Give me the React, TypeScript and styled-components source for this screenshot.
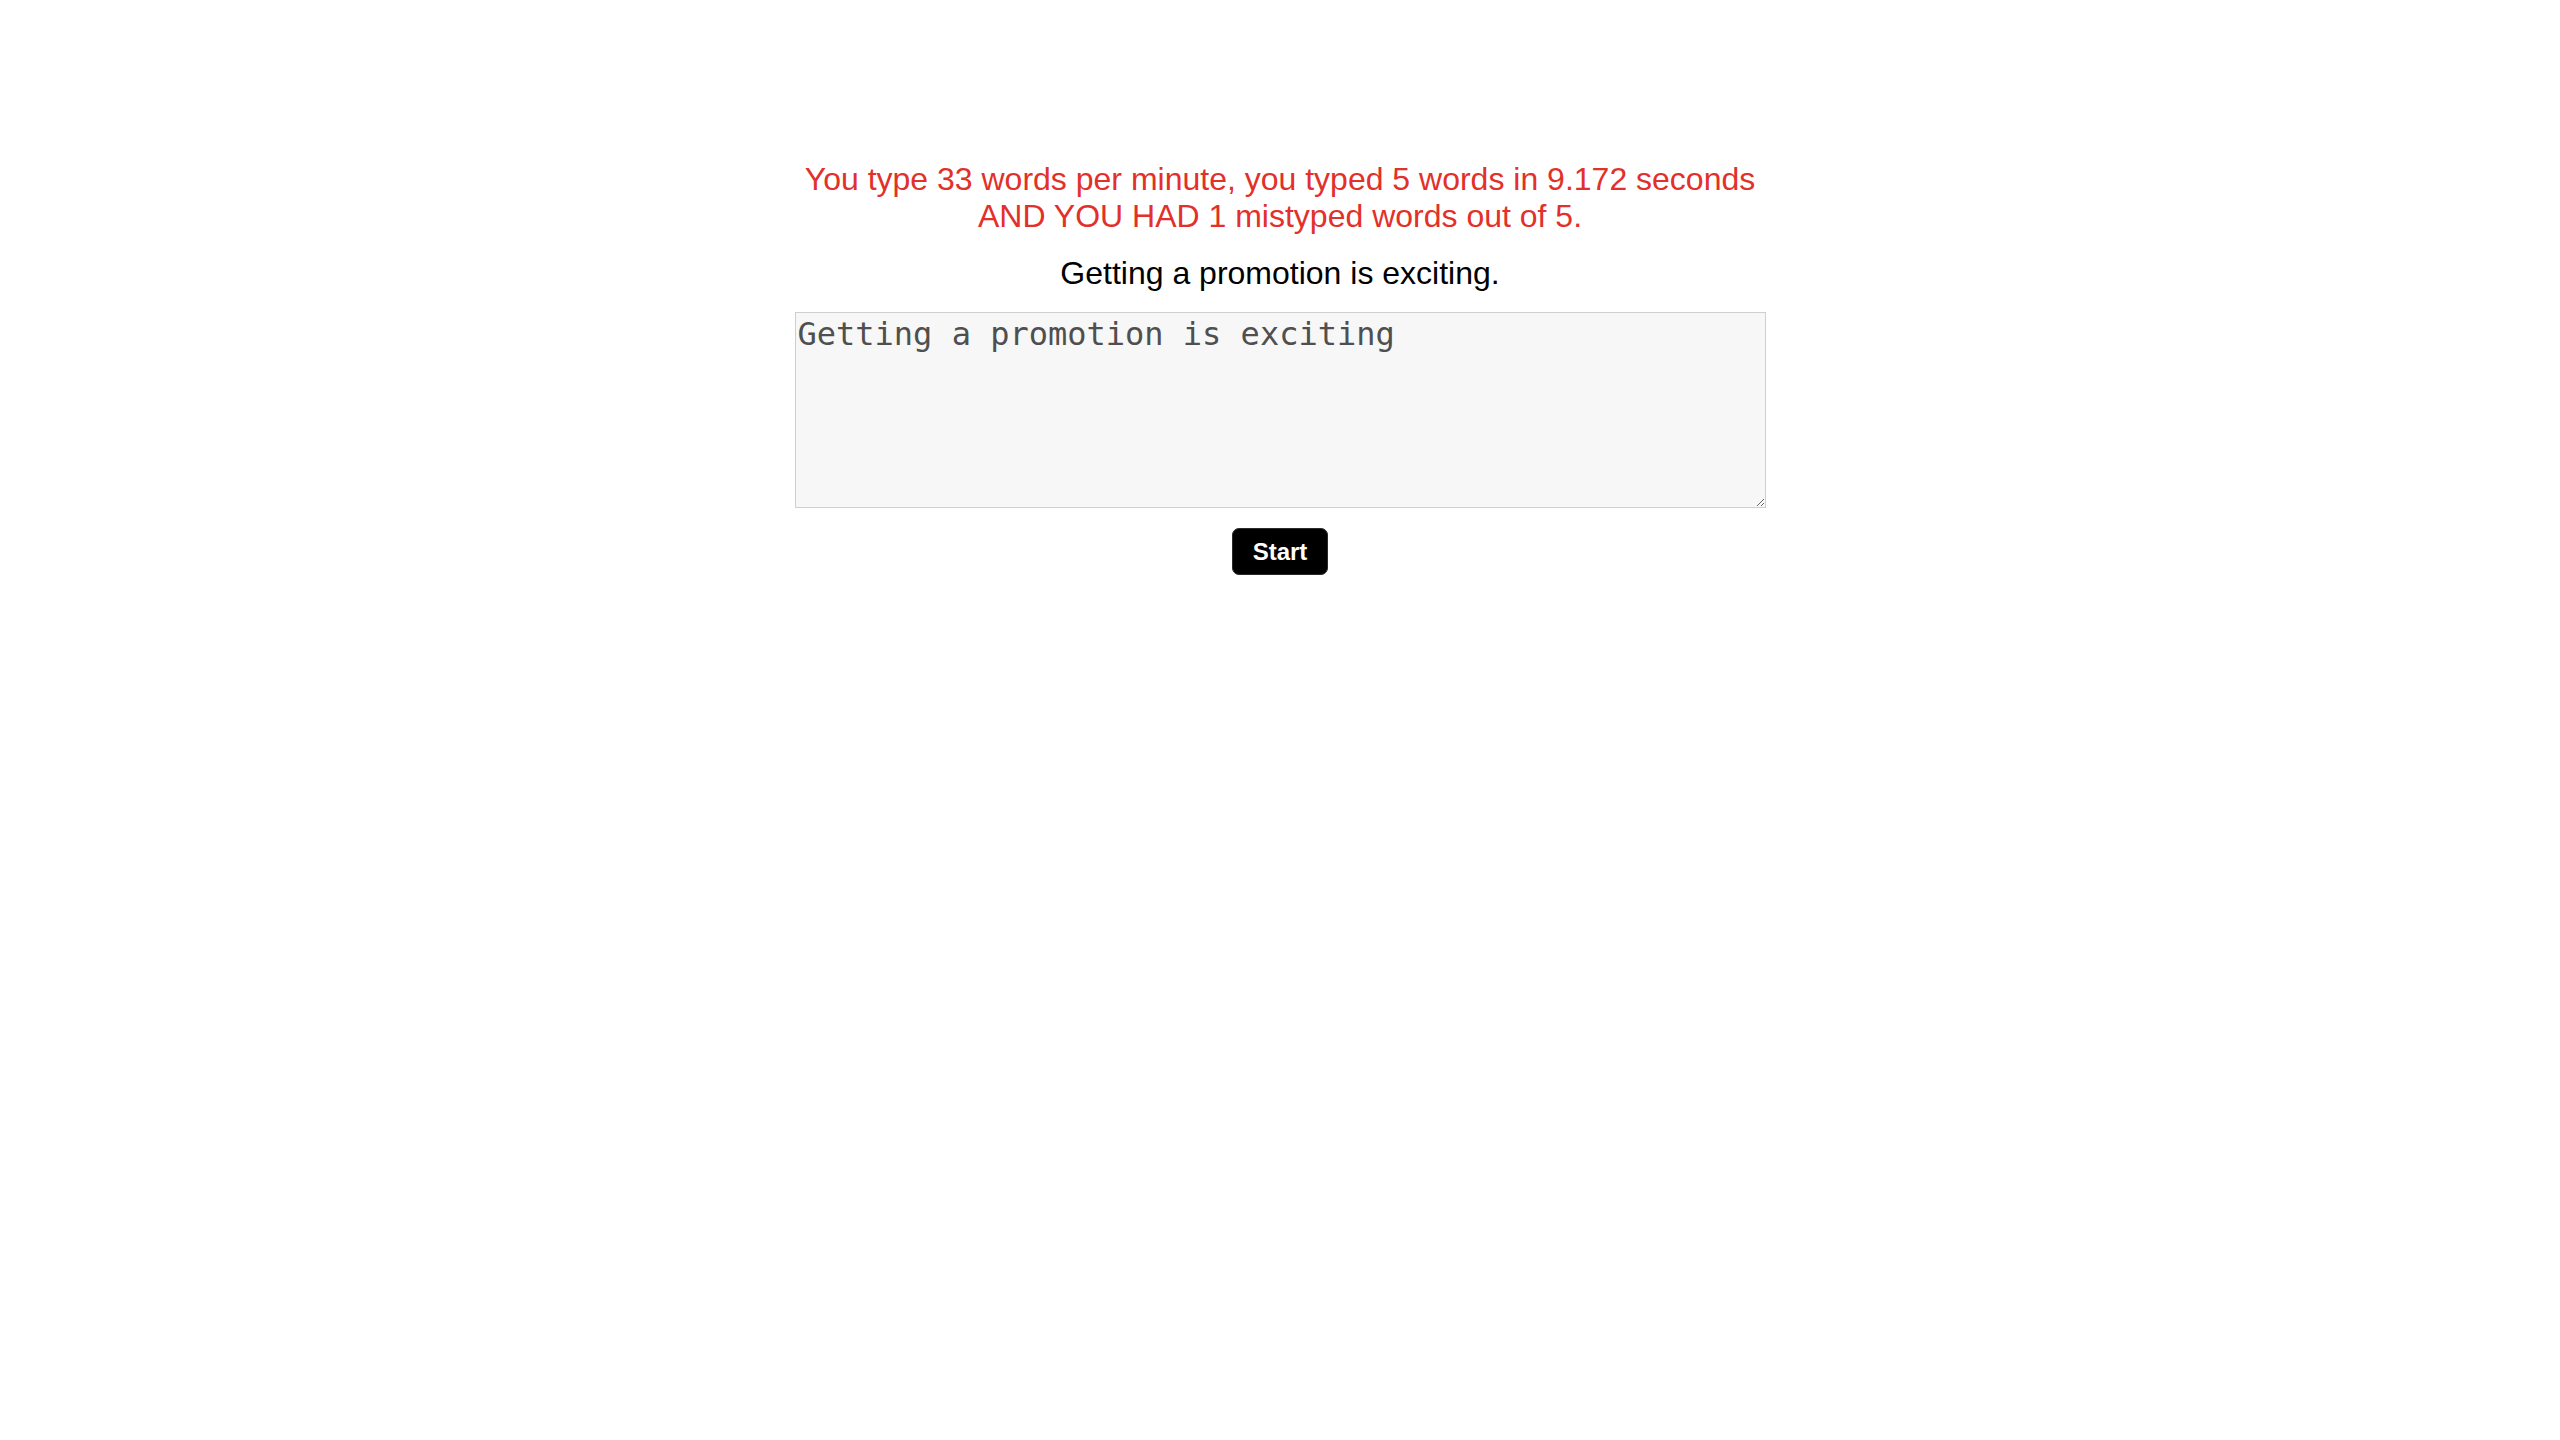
import React, { useState } from "react";
import styled, { createGlobalStyle } from "styled-components";

const GlobalStyle = createGlobalStyle`
  html, body {
    margin: 0;
    padding: 0;
    background: #ffffff;
  }
  body {
    font-family: "Liberation Sans", Arial, sans-serif;
  }
`;

const Page = styled.main`
  display: flex;
  flex-direction: column;
  align-items: center;
  padding-top: 161px;
  font-family: "Liberation Sans", Arial, sans-serif;
`;

const Result = styled.p`
  margin: 0 0 20px 0;
  color: #e2302a;
  font-size: 32px;
  line-height: normal;
  text-align: center;
`;

const Prompt = styled.p`
  margin: 0 0 20px 0;
  color: #000000;
  font-size: 32px;
  line-height: normal;
  text-align: center;
`;

const Input = styled.textarea`
  box-sizing: border-box;
  width: 971px;
  height: 196px;
  margin: 0 0 20px 0;
  padding: 2px;
  border: 1px solid #cfcfcf;
  background: #f7f7f7;
  color: #4f4f4f;
  font-family: "DejaVu Sans Mono", monospace;
  font-size: 32px;
  line-height: normal;
  resize: both;
  outline: none;
`;

const StartButton = styled.button`
  box-sizing: border-box;
  height: 47px;
  padding: 0 20px;
  border: 1px solid #2a2a2a;
  border-radius: 7px;
  background: #000000;
  color: #ffffff;
  font-family: "Liberation Sans", Arial, sans-serif;
  font-weight: bold;
  font-size: 24px;
  cursor: pointer;
`;

export default function App() {
  const [text, setText] = useState("Getting a promotion is exciting");
  return (
    <>
      <GlobalStyle />
      <Page>
        <Result>
          You type 33 words per minute, you typed 5 words in 9.172 seconds
          <br />
          AND YOU HAD 1 mistyped words out of 5.
        </Result>
        <Prompt>Getting a promotion is exciting.</Prompt>
        <Input value={text} onChange={(e) => setText(e.target.value)} />
        <StartButton>Start</StartButton>
      </Page>
    </>
  );
}
